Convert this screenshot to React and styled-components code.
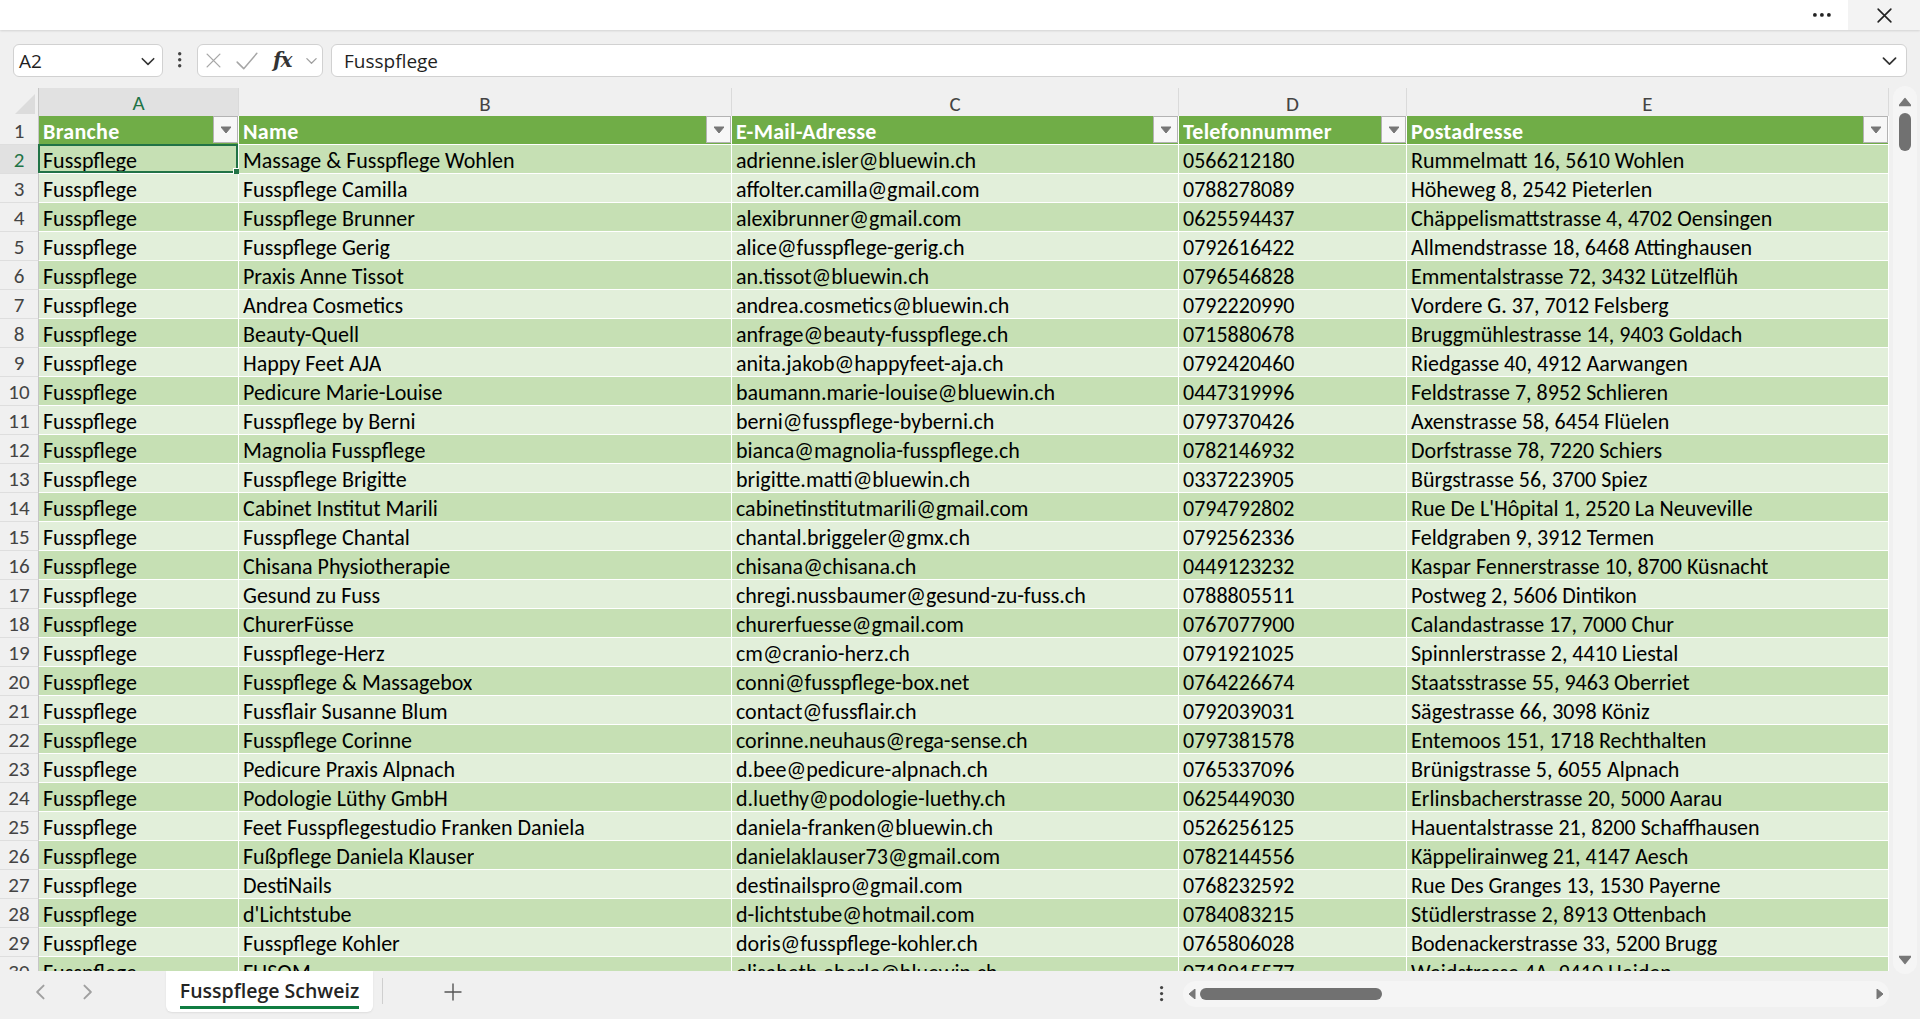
import React from "react";
import styled, { createGlobalStyle } from "styled-components";

const CELL_FONT = `Calibri, Carlito, Lato, "Liberation Sans", sans-serif`;
const UI_FONT = `"Segoe UI", "Open Sans", "Noto Sans", sans-serif`;

const colors = {
    page: "#f0f0f0",
    header: "#70ad47",
    bandDark: "#c6e0b4",
    bandLight: "#e2efda",
    excelGreen: "#217346",
    tabGreen: "#107c41",
    thumb: "#717171",
    border: "#d1d1d1",
};

const GlobalStyle = createGlobalStyle`
    html, body {
        margin: 0;
        padding: 0;
        background: ${colors.page};
        overflow: hidden;
    }
    body {
        font-family: ${UI_FONT};
    }
`;

const columns = [
    { letter: "A", title: "Branche", width: 200 },
    { letter: "B", title: "Name", width: 493 },
    { letter: "C", title: "E-Mail-Adresse", width: 447 },
    { letter: "D", title: "Telefonnummer", width: 228 },
    { letter: "E", title: "Postadresse", width: 482 },
];

const TEMPLATE = `39px ${columns.map((c) => c.width + "px").join(" ")}`;

const rows = [
    ["Massage & Fusspflege Wohlen", "adrienne.isler@bluewin.ch", "0566212180", "Rummelmatt 16, 5610 Wohlen"],
    ["Fusspflege Camilla", "affolter.camilla@gmail.com", "0788278089", "Höheweg 8, 2542 Pieterlen"],
    ["Fusspflege Brunner", "alexibrunner@gmail.com", "0625594437", "Chäppelismattstrasse 4, 4702 Oensingen"],
    ["Fusspflege Gerig", "alice@fusspflege-gerig.ch", "0792616422", "Allmendstrasse 18, 6468 Attinghausen"],
    ["Praxis Anne Tissot", "an.tissot@bluewin.ch", "0796546828", "Emmentalstrasse 72, 3432 Lützelflüh"],
    ["Andrea Cosmetics", "andrea.cosmetics@bluewin.ch", "0792220990", "Vordere G. 37, 7012 Felsberg"],
    ["Beauty-Quell", "anfrage@beauty-fusspflege.ch", "0715880678", "Bruggmühlestrasse 14, 9403 Goldach"],
    ["Happy Feet AJA", "anita.jakob@happyfeet-aja.ch", "0792420460", "Riedgasse 40, 4912 Aarwangen"],
    ["Pedicure Marie-Louise", "baumann.marie-louise@bluewin.ch", "0447319996", "Feldstrasse 7, 8952 Schlieren"],
    ["Fusspflege by Berni", "berni@fusspflege-byberni.ch", "0797370426", "Axenstrasse 58, 6454 Flüelen"],
    ["Magnolia Fusspflege", "bianca@magnolia-fusspflege.ch", "0782146932", "Dorfstrasse 78, 7220 Schiers"],
    ["Fusspflege Brigitte", "brigitte.matti@bluewin.ch", "0337223905", "Bürgstrasse 56, 3700 Spiez"],
    ["Cabinet Institut Marili", "cabinetinstitutmarili@gmail.com", "0794792802", "Rue De L'Hôpital 1, 2520 La Neuveville"],
    ["Fusspflege Chantal", "chantal.briggeler@gmx.ch", "0792562336", "Feldgraben 9, 3912 Termen"],
    ["Chisana Physiotherapie", "chisana@chisana.ch", "0449123232", "Kaspar Fennerstrasse 10, 8700 Küsnacht"],
    ["Gesund zu Fuss", "chregi.nussbaumer@gesund-zu-fuss.ch", "0788805511", "Postweg 2, 5606 Dintikon"],
    ["ChurerFüsse", "churerfuesse@gmail.com", "0767077900", "Calandastrasse 17, 7000 Chur"],
    ["Fusspflege-Herz", "cm@cranio-herz.ch", "0791921025", "Spinnlerstrasse 2, 4410 Liestal"],
    ["Fusspflege & Massagebox", "conni@fusspflege-box.net", "0764226674", "Staatsstrasse 55, 9463 Oberriet"],
    ["Fussflair Susanne Blum", "contact@fussflair.ch", "0792039031", "Sägestrasse 66, 3098 Köniz"],
    ["Fusspflege Corinne", "corinne.neuhaus@rega-sense.ch", "0797381578", "Entemoos 151, 1718 Rechthalten"],
    ["Pedicure Praxis Alpnach", "d.bee@pedicure-alpnach.ch", "0765337096", "Brünigstrasse 5, 6055 Alpnach"],
    ["Podologie Lüthy GmbH", "d.luethy@podologie-luethy.ch", "0625449030", "Erlinsbacherstrasse 20, 5000 Aarau"],
    ["Feet Fusspflegestudio Franken Daniela", "daniela-franken@bluewin.ch", "0526256125", "Hauentalstrasse 21, 8200 Schaffhausen"],
    ["Fußpflege Daniela Klauser", "danielaklauser73@gmail.com", "0782144556", "Käppelirainweg 21, 4147 Aesch"],
    ["DestiNails", "destinailspro@gmail.com", "0768232592", "Rue Des Granges 13, 1530 Payerne"],
    ["d'Lichtstube", "d-lichtstube@hotmail.com", "0784083215", "Stüdlerstrasse 2, 8913 Ottenbach"],
    ["Fusspflege Kohler", "doris@fusspflege-kohler.ch", "0765806028", "Bodenackerstrasse 33, 5200 Brugg"],
    ["FUSOM", "elisabeth.eberle@bluewin.ch", "0718915577", "Weidstrasse 4A, 9410 Heiden"],
];

/* ---------- icons ---------- */

const Chevron = ({ size = 14, color = "#444", dir = "down", stroke = 1.4 }) => {
    const pts = {
        down: "2,5 7,10 12,5",
        left: "9,2 4,7 9,12",
        right: "5,2 10,7 5,12",
    }[dir];
    return (
        <svg width={size} height={size} viewBox="0 0 14 14">
            <polyline points={pts} fill="none" stroke={color} strokeWidth={stroke} strokeLinecap="round" strokeLinejoin="round" />
        </svg>
    );
};

const Cross = ({ size = 16, color = "#333", stroke = 1.4 }) => (
    <svg width={size} height={size} viewBox="0 0 16 16">
        <path d="M2 2 L14 14 M14 2 L2 14" stroke={color} strokeWidth={stroke} strokeLinecap="round" />
    </svg>
);

const Check = ({ size = 22, color = "#a6a6a6" }) => (
    <svg width={size} height={size} viewBox="0 0 22 22">
        <polyline points="2,12 8,18 20,4" fill="none" stroke={color} strokeWidth="1.4" strokeLinecap="round" strokeLinejoin="round" />
    </svg>
);

const Plus = ({ size = 18, color = "#444" }) => (
    <svg width={size} height={size} viewBox="0 0 18 18">
        <path d="M9 1 V17 M1 9 H17" stroke={color} strokeWidth="1.4" strokeLinecap="round" />
    </svg>
);

const Dots = ({ vertical, color = "#333", r = 1.6, gap = 6 }) => {
    const n = [0, 1, 2];
    const len = gap * 2 + r * 4;
    return vertical ? (
        <svg width={r * 2 + 2} height={len} viewBox={`0 0 ${r * 2 + 2} ${len}`}>
            {n.map((i) => <circle key={i} cx={r + 1} cy={r + 1 + i * gap} r={r} fill={color} />)}
        </svg>
    ) : (
        <svg width={len} height={r * 2 + 2} viewBox={`0 0 ${len} ${r * 2 + 2}`}>
            {n.map((i) => <circle key={i} cx={r + 1 + i * gap} cy={r + 1} r={r} fill={color} />)}
        </svg>
    );
};

const Triangle = ({ dir = "down", size = 10, color = "#777" }) => {
    const pts = {
        down: "0,2 10,2 5,8",
        up: "0,8 10,8 5,2",
        left: "8,0 8,10 2,5",
        right: "2,0 2,10 8,5",
    }[dir];
    return (
        <svg width={size} height={size} viewBox="0 0 10 10">
            <polygon points={pts} fill={color} strokeLinejoin="round" stroke={color} strokeWidth="1" />
        </svg>
    );
};

/* ---------- title bar ---------- */

const TitleBar = styled.div`
    height: 30px;
    background: #fff;
    display: flex;
    justify-content: flex-end;
    align-items: stretch;
    box-shadow: 0 1px 2px rgba(0, 0, 0, 0.12);
    position: relative;
    z-index: 2;
`;

const TitleButton = styled.div`
    width: ${(p) => p.$w}px;
    display: flex;
    align-items: center;
    justify-content: center;
    background: ${(p) => (p.$shaded ? "#f3f3f3" : "transparent")};
`;

/* ---------- formula bar ---------- */

const FormulaBar = styled.div`
    display: flex;
    align-items: center;
    height: 33px;
    margin: 14px 13px 11px 13px;
    gap: 8px;
`;

const Field = styled.div`
    box-sizing: border-box;
    height: 33px;
    background: #fff;
    border: 1px solid ${colors.border};
    border-radius: 6px;
    display: flex;
    align-items: center;
    font-family: ${UI_FONT};
    font-size: 19px;
    color: #1f1f1f;
`;

const NameBox = styled(Field)`
    width: 150px;
    padding: 0 6px 0 5px;
    justify-content: space-between;
`;

const MoreButton = styled.div`
    width: 18px;
    display: flex;
    justify-content: center;
`;

const FxBox = styled(Field)`
    width: 126px;
    padding: 0 4px 0 7px;
    justify-content: space-between;
`;

const FxLabel = styled.span`
    font-family: "DejaVu Serif", "Liberation Serif", serif;
    font-style: italic;
    font-weight: bold;
    font-size: 20px;
    color: #333;
    letter-spacing: -1px;
    margin-top: -2px;
`;

const FormulaInput = styled(Field)`
    flex: 1;
    padding: 0 8px 0 12px;
    justify-content: space-between;
`;

/* ---------- sheet grid ---------- */

const SheetArea = styled.div`
    display: flex;
    height: 883px;
`;

const Grid = styled.div`
    width: 1889px;
    overflow: hidden;
`;

const GridRow = styled.div`
    display: grid;
    grid-template-columns: ${TEMPLATE};
    height: ${(p) => p.$h || 29}px;
`;

const Corner = styled.div`
    box-sizing: border-box;
    border-right: 1px solid #c6c6c6;
    border-bottom: 1px solid #bdbdbd;
    display: flex;
    align-items: flex-end;
    justify-content: flex-end;
    padding: 0 3px 3px 0;
`;

const CornerMark = styled.div`
    width: 0;
    height: 0;
    border-left: 20px solid transparent;
    border-bottom: 20px solid #dcdcdc;
`;

const ColHead = styled.div`
    box-sizing: border-box;
    background: ${(p) => (p.$active ? "#e1e1e1" : colors.page)};
    border-right: 1px solid #dadada;
    border-bottom: ${(p) => (p.$active ? `2px solid ${colors.excelGreen}` : "1px solid #bdbdbd")};
    color: ${(p) => (p.$active ? colors.excelGreen : "#444")};
    font-family: ${CELL_FONT};
    font-size: 21px;
    display: flex;
    align-items: center;
    justify-content: center;
    padding-top: 2px;
`;

const RowHead = styled.div`
    box-sizing: border-box;
    background: ${(p) => (p.$active ? "#e1e1e1" : colors.page)};
    border-right: 1px solid #c6c6c6;
    border-bottom: 1px solid #dedede;
    color: ${(p) => (p.$active ? colors.excelGreen : "#444")};
    font-family: ${CELL_FONT};
    font-size: 21px;
    padding-top: 3px;
    line-height: 25px;
    text-align: center;
`;

const Cell = styled.div`
    box-sizing: border-box;
    position: relative;
    background: ${(p) => (p.$header ? colors.header : p.$dark ? colors.bandDark : colors.bandLight)};
    border-right: 1px solid #fff;
    border-bottom: 1px solid #fff;
    color: ${(p) => (p.$header ? "#fff" : "#000")};
    font-family: ${CELL_FONT};
    font-weight: ${(p) => (p.$header ? 700 : 400)};
    letter-spacing: ${(p) => (p.$header ? "0.3px" : "0")};
    font-size: 22px;
    padding-left: 4px;
    white-space: nowrap;
    display: flex;
    justify-content: space-between;
    align-items: stretch;
`;

const CellText = styled.span`
    display: block;
    overflow: hidden;
    padding-top: 4px;
    line-height: 24px;
`;

const Selection = styled.div`
    position: absolute;
    inset: -1px 0 0 -1px;
    border: 2px solid ${colors.excelGreen};
    pointer-events: none;
    &::after {
        content: "";
        position: absolute;
        right: -5px;
        bottom: -5px;
        width: 6px;
        height: 6px;
        background: ${colors.excelGreen};
        border: 1px solid #fff;
    }
`;

const FilterButton = styled.div`
    box-sizing: border-box;
    width: 25px;
    height: 27px;
    background: #f7f7f7;
    border: 1px solid #b3b3b3;
    display: flex;
    align-items: center;
    justify-content: center;
`;

/* ---------- scrollbars ---------- */

const VScrollLane = styled.div`
    width: 31px;
    display: flex;
    justify-content: center;
`;

const VTrack = styled.div`
    width: 24px;
    margin-top: -2px;
    height: 888px;
    background: #f5f5f5;
    border-radius: 12px;
    display: flex;
    flex-direction: column;
    align-items: center;
    padding: 10px 0 8px;
    box-sizing: border-box;
`;

const VThumb = styled.div`
    width: 12px;
    height: 38px;
    border-radius: 6px;
    background: ${colors.thumb};
    margin-top: 5px;
`;

const Spacer = styled.div`
    flex: 1;
`;

/* ---------- sheet tabs ---------- */

const BottomBar = styled.div`
    height: 48px;
    display: flex;
    align-items: flex-start;
`;

const NavButtons = styled.div`
    width: 166px;
    height: 42px;
    display: flex;
    align-items: center;
    gap: 28px;
    padding-left: 32px;
    box-sizing: border-box;
`;

const SheetTab = styled.div`
    box-sizing: border-box;
    width: 207px;
    height: 41px;
    background: #fff;
    border-radius: 0 0 6px 6px;
    display: flex;
    align-items: center;
    justify-content: center;
    box-shadow: 0 1px 2px rgba(0, 0, 0, 0.08);
`;

const TabLabel = styled.span`
    font-family: ${UI_FONT};
    font-weight: 600;
    font-size: 19.5px;
    color: #242424;
    padding-bottom: 1px;
    border-bottom: 3px solid ${colors.tabGreen};
    line-height: 28px;
    margin-top: 2px;
`;

const TabDivider = styled.div`
    width: 1px;
    height: 26px;
    background: #cfcfcf;
    margin: 7px 0 0 9px;
`;

const AddSheet = styled.div`
    width: 140px;
    height: 42px;
    display: flex;
    align-items: center;
    justify-content: center;
`;

const HScrollArea = styled.div`
    flex: 1;
    display: flex;
    align-items: center;
    height: 46px;
`;

const HMore = styled.div`
    width: 30px;
    margin: 0 6px 0 auto;
    display: flex;
    justify-content: center;
`;

const HTrack = styled.div`
    box-sizing: border-box;
    width: 706px;
    height: 26px;
    margin-right: 31px;
    background: #f5f5f5;
    border-radius: 13px;
    display: flex;
    align-items: center;
    padding: 0 4px;
`;

const HThumb = styled.div`
    width: 182px;
    height: 12px;
    border-radius: 6px;
    background: ${colors.thumb};
    margin-left: 3px;
`;

/* ---------- page ---------- */

const Page = styled.div`
    width: 1920px;
    height: 1019px;
    background: ${colors.page};
    overflow: hidden;
`;

export default function App() {
    return (
        <Page>
            <GlobalStyle />
            <TitleBar>
                <TitleButton $w={50}>
                    <Dots color="#222" r={1.9} gap={7} />
                </TitleButton>
                <TitleButton $w={72} $shaded>
                    <Cross size={17} color="#222" stroke={1.5} />
                </TitleButton>
            </TitleBar>

            <FormulaBar>
                <NameBox>
                    <span>A2</span>
                    <Chevron size={16} color="#333" />
                </NameBox>
                <MoreButton>
                    <Dots vertical color="#444" r={1.7} gap={6} />
                </MoreButton>
                <FxBox>
                    <Cross size={17} color="#a8a8a8" stroke={1.3} />
                    <Check size={24} />
                    <FxLabel>fx</FxLabel>
                    <Chevron size={13} color="#a0a0a0" />
                </FxBox>
                <FormulaInput>
                    <span>Fusspflege</span>
                    <Chevron size={17} color="#333" />
                </FormulaInput>
            </FormulaBar>

            <SheetArea>
                <Grid>
                    <GridRow $h={28}>
                        <Corner>
                            <CornerMark />
                        </Corner>
                        {columns.map((c, i) => (
                            <ColHead key={c.letter} $active={i === 0}>
                                {c.letter}
                            </ColHead>
                        ))}
                    </GridRow>

                    <GridRow>
                        <RowHead>1</RowHead>
                        {columns.map((c) => (
                            <Cell key={c.letter} $header>
                                <CellText>{c.title}</CellText>
                                <FilterButton>
                                    <Triangle dir="down" size={10} color="#777" />
                                </FilterButton>
                            </Cell>
                        ))}
                    </GridRow>

                    {rows.map((r, i) => {
                        const rowNo = i + 2;
                        const dark = i % 2 === 0;
                        return (
                            <GridRow key={rowNo}>
                                <RowHead $active={rowNo === 2}>{rowNo}</RowHead>
                                {["Fusspflege", ...r].map((v, j) => (
                                    <Cell key={j} $dark={dark}>
                                        <CellText>{v}</CellText>
                                        {rowNo === 2 && j === 0 && <Selection />}
                                    </Cell>
                                ))}
                            </GridRow>
                        );
                    })}
                </Grid>
                <VScrollLane>
                    <VTrack>
                        <Triangle dir="up" size={12} color="#777" />
                        <VThumb />
                        <Spacer />
                        <Triangle dir="down" size={12} color="#777" />
                    </VTrack>
                </VScrollLane>
            </SheetArea>

            <BottomBar>
                <NavButtons>
                    <Chevron dir="left" size={18} color="#a0a0a0" stroke={1.5} />
                    <Chevron dir="right" size={18} color="#a0a0a0" stroke={1.5} />
                </NavButtons>
                <SheetTab>
                    <TabLabel>Fusspflege Schweiz</TabLabel>
                </SheetTab>
                <TabDivider />
                <AddSheet>
                    <Plus size={18} color="#555" />
                </AddSheet>
                <HScrollArea>
                    <HMore>
                        <Dots vertical color="#444" r={1.6} gap={6} />
                    </HMore>
                    <HTrack>
                        <Triangle dir="left" size={10} color="#777" />
                        <HThumb />
                        <Spacer />
                        <Triangle dir="right" size={10} color="#777" />
                    </HTrack>
                </HScrollArea>
            </BottomBar>
        </Page>
    );
}
